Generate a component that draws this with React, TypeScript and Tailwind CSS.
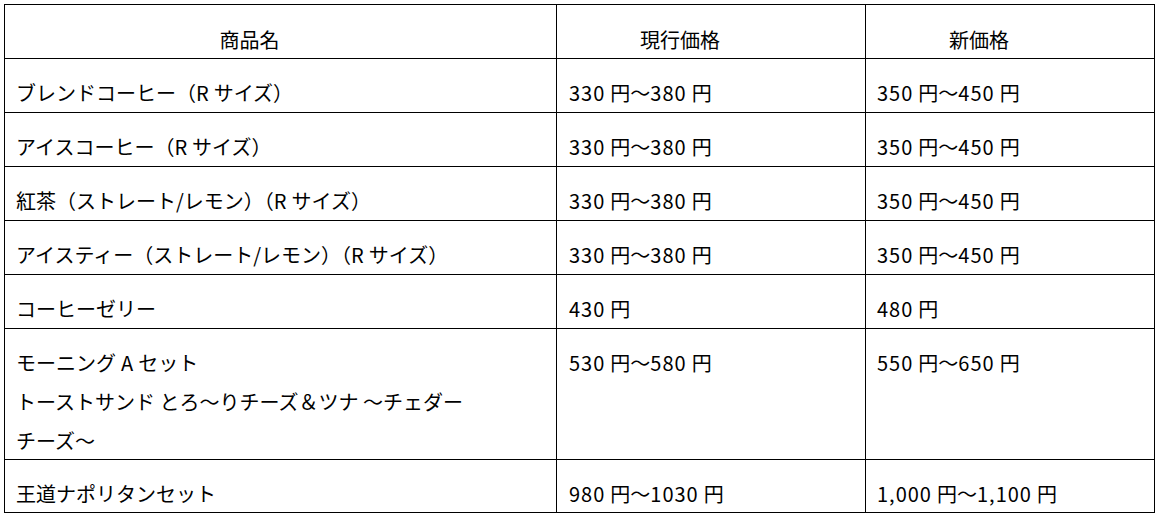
import clsx from "clsx";

// 和文と欧文の間に少し隙間を入れる (Word の自動スペース風)
const cjk = /[\u3040-\u30ff\u4e00-\u9fff]/;

function spaced(text: string) {
  const parts = text.match(/[A-Za-z0-9,]+|[^A-Za-z0-9,]+/g) ?? [];
  return parts.map((p, i) => {
    if (!/^[A-Za-z0-9,]/.test(p)) return p;
    const prev = parts[i - 1]?.slice(-1) ?? "";
    const next = parts[i + 1]?.[0] ?? "";
    return (
      <span
        key={i}
        className={clsx(
          /^[0-9]/.test(p) && "tracking-[1px]",
          cjk.test(prev) && "ml-[5px]",
          cjk.test(next) && "mr-[5px]"
        )}
      >
        {p}
      </span>
    );
  });
}

type Row = { name: string[]; current: string; next: string };

const rows: Row[] = [
  { name: ["ブレンドコーヒー（Rサイズ）"], current: "330円～380円", next: "350円～450円" },
  { name: ["アイスコーヒー（Rサイズ）"], current: "330円～380円", next: "350円～450円" },
  { name: ["紅茶（ストレート/レモン）（Rサイズ）"], current: "330円～380円", next: "350円～450円" },
  { name: ["アイスティー（ストレート/レモン）（Rサイズ）"], current: "330円～380円", next: "350円～450円" },
  { name: ["コーヒーゼリー"], current: "430円", next: "480円" },
  {
    name: ["モーニングAセット", "トーストサンド とろ～りチーズ＆ツナ ～チェダー", "チーズ～"],
    current: "530円～580円",
    next: "550円～650円",
  },
  { name: ["王道ナポリタンセット"], current: "980円～1030円", next: "1,000円～1,100円" },
];

function HeadCell({ children }: { children: string }) {
  return <div className="bg-white pt-[15px] pr-[62px] text-center">{children}</div>;
}

export default function App() {
  return (
    <div className="min-h-screen bg-white p-[4px] font-['Noto_Sans_CJK_JP','Noto_Sans',sans-serif] text-[20px] leading-[39px] text-black">
      <div className="grid w-[1151px] grid-cols-[551px_308px_288px] grid-rows-[53px_53px_53px_53px_53px_53px_130px_52px] gap-px bg-black p-px">
        <HeadCell>商品名</HeadCell>
        <HeadCell>現行価格</HeadCell>
        <HeadCell>新価格</HeadCell>

        {rows.map((r, i) => (
          <div key={i} className="contents">
            <div className="bg-white pt-[14px] pl-[11px] whitespace-nowrap">
              {r.name.map((line, j) => (
                <div key={j}>{spaced(line)}</div>
              ))}
            </div>
            <div className="bg-white pt-[14px] pl-[12px] whitespace-nowrap">{spaced(r.current)}</div>
            <div className="bg-white pt-[14px] pl-[11px] whitespace-nowrap">{spaced(r.next)}</div>
          </div>
        ))}
      </div>
    </div>
  );
}
